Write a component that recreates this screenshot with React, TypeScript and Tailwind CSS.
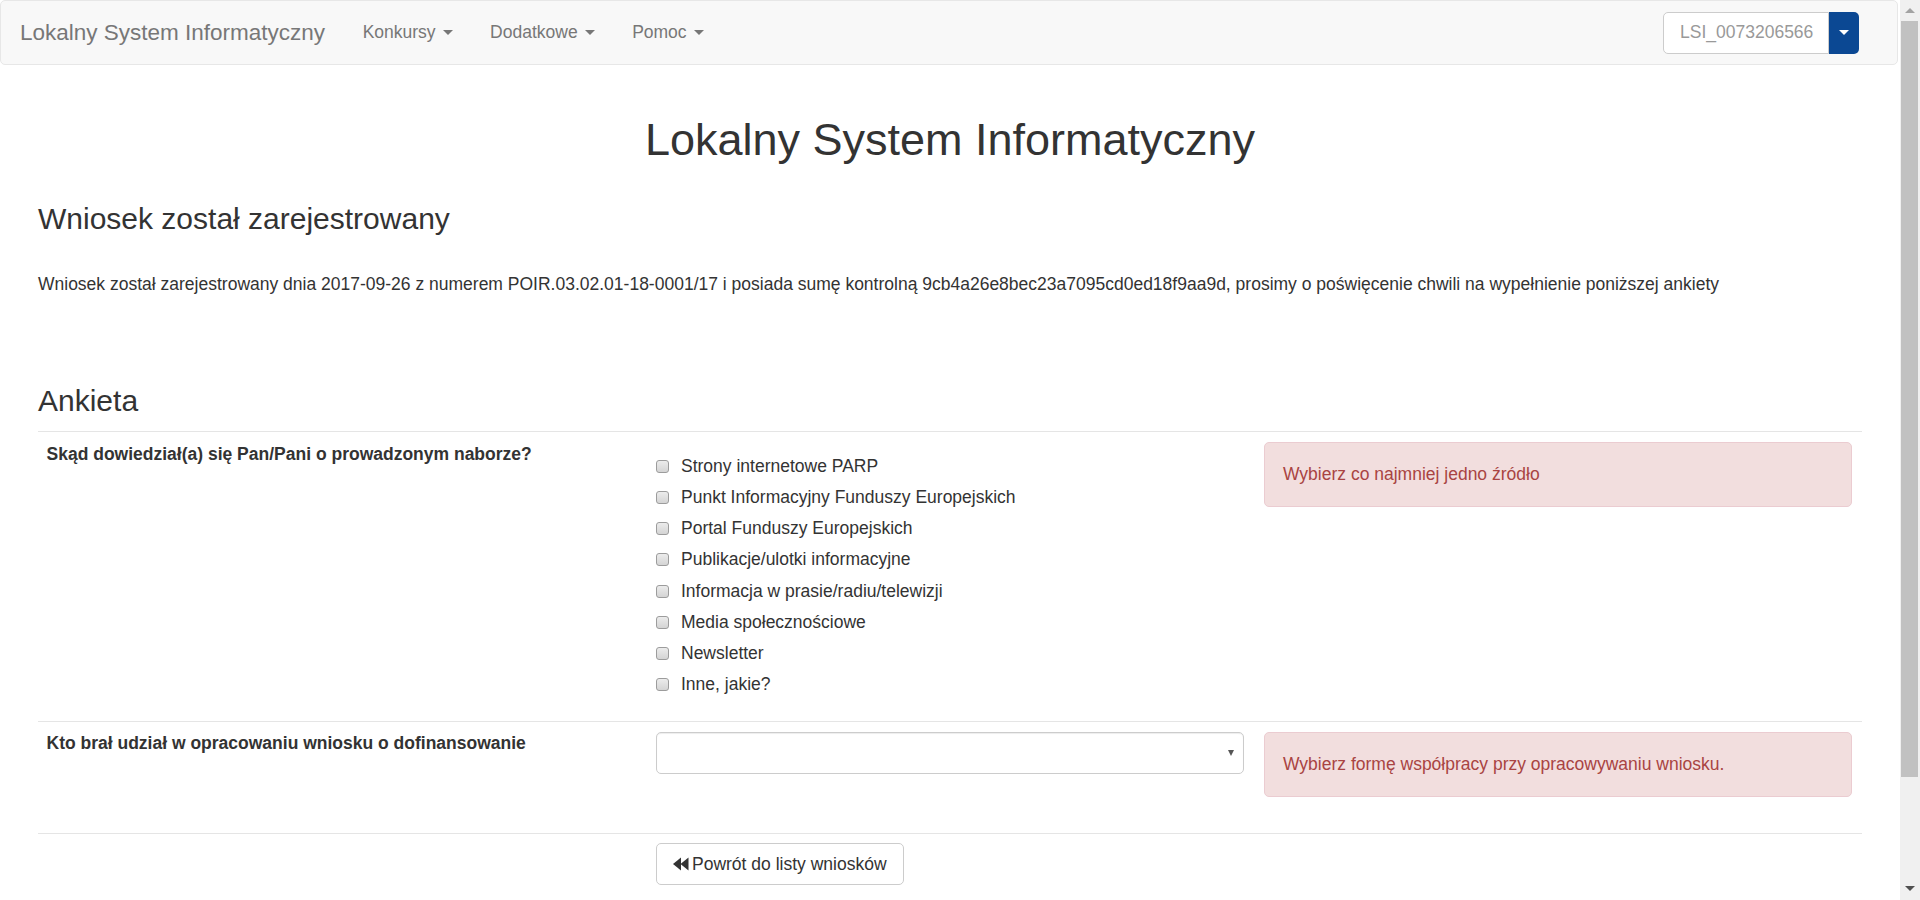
import React from 'react';

// Small caret used by dropdown toggles
const Caret = ({ className = '' }: { className?: string }) => (
  <span
    className={`inline-block h-0 w-0 border-x-[5px] border-t-[5px] border-x-transparent border-t-current align-middle ${className}`}
  />
);

const sources = [
  'Strony internetowe PARP',
  'Punkt Informacyjny Funduszy Europejskich',
  'Portal Funduszy Europejskich',
  'Publikacje/ulotki informacyjne',
  'Informacja w prasie/radiu/telewizji',
  'Media społecznościowe',
  'Newsletter',
  'Inne, jakie?',
];

const navItems = ['Konkursy', 'Dodatkowe', 'Pomoc'];

// Gray windows-like checkbox
const FakeCheckbox = () => (
  <span className="inline-block h-[13px] w-[13px] shrink-0 rounded-[3px] border border-[#9c9c9c] bg-linear-to-b from-[#ececec] to-[#d4d4d4]" />
);

const Navbar = () => (
  <nav className="mr-[2px] flex h-[65px] items-center rounded-[5px] border border-[#e7e7e7] bg-[#f8f8f8] pl-[19px] pr-[38px]">
    <span className="mr-[18.75px] text-[22.5px] leading-[25px] text-[#777]">Lokalny System Informatyczny</span>
    <ul className="flex">
      {navItems.map((item) => (
        <li key={item} className="flex items-center px-[18.75px] text-[#777]">
          <span>{item}</span>
          <Caret className="ml-[7px]" />
        </li>
      ))}
    </ul>
    <div className="ml-auto flex h-[42px]">
      <div className="flex w-[166px] items-center rounded-l-[5px] border border-[#ccc] bg-white pl-[16px] text-[#999]">
        LSI_0073206566
      </div>
      <div className="flex w-[30px] items-center justify-center rounded-r-[5px] bg-[#0b4893] text-white">
        <Caret />
      </div>
    </div>
  </nav>
);

const Alert = ({ children }: { children: React.ReactNode }) => (
  <div className="rounded-[5px] border border-[#ebccd1] bg-[#f2dede] px-[18px] py-[19px] text-[#a94442]">{children}</div>
);

const Scrollbar = () => (
  <div className="flex h-[900px] w-[20px] shrink-0 flex-col bg-[#f0f0f0]">
    <div className="flex h-[21px] items-center justify-center">
      <span className="inline-block h-0 w-0 border-x-[5px] border-b-[5px] border-x-transparent border-b-[#a3a3a3]" />
    </div>
    <div className="ml-[1px] h-[756px] w-[17px] bg-[#c1c1c1]" />
    <div className="flex flex-1 items-end justify-center pb-[9px]">
      <span className="inline-block h-0 w-0 border-x-[5px] border-t-[5px] border-x-transparent border-t-[#505050]" />
    </div>
  </div>
);

export default function App() {
  return (
    <div className="flex h-[900px] overflow-hidden bg-white font-['Liberation_Sans',Arial,sans-serif] text-[17.5px] leading-[25px] text-[#333]">
      <div className="min-w-0 flex-1">
        <Navbar />

        <main className="px-[38px]">
          <h1 className="mt-[50px] text-center text-[45px] leading-[49.5px] font-normal">Lokalny System Informatyczny</h1>

          <h3 className="mt-[37.5px] text-[30px] leading-[33px] font-normal">Wniosek został zarejestrowany</h3>
          <p className="mt-[36.5px]">
            Wniosek został zarejestrowany dnia 2017-09-26 z numerem POIR.03.02.01-18-0001/17 i posiada sumę kontrolną
            9cb4a26e8bec23a7095cd0ed18f9aa9d, prosimy o poświęcenie chwili na wypełnienie poniższej ankiety
          </p>

          <h3 className="mt-[87px] text-[30px] leading-[33px] font-normal">Ankieta</h3>

          <div className="mt-[14.5px]">
            {/* Question 1 */}
            <div className="grid grid-cols-3 border-t border-[#e5e5e5] pt-[10px] pb-[23.75px]">
              <div className="pl-[8.5px] pr-[10px] font-bold">Skąd dowiedział(a) się Pan/Pani o prowadzonym naborze?</div>
              <div className="flex flex-col gap-[6.25px] px-[10px] pt-[11.5px]">
                {sources.map((s) => (
                  <label key={s} className="flex h-[25px] items-center">
                    <FakeCheckbox />
                    <span className="ml-[12px]">{s}</span>
                  </label>
                ))}
              </div>
              <div className="px-[10px]">
                <Alert>Wybierz co najmniej jedno źródło</Alert>
              </div>
            </div>

            {/* Question 2 */}
            <div className="grid grid-cols-3 border-t border-[#e5e5e5] pt-[10px] pb-[36px]">
              <div className="-mt-[1.5px] pl-[8.5px] pr-[10px] font-bold">Kto brał udział w opracowaniu wniosku o dofinansowanie</div>
              <div className="px-[10px]">
                <div className="flex h-[42px] items-center justify-end rounded-[5px] border border-[#ccc] bg-white pr-[9px] shadow-[inset_0_1px_1px_rgba(0,0,0,0.075)]">
                  <span className="inline-block h-0 w-0 border-x-[3.5px] border-t-[6px] border-x-transparent border-t-[#555]" />
                </div>
              </div>
              <div className="px-[10px]">
                <Alert>Wybierz formę współpracy przy opracowywaniu wniosku.</Alert>
              </div>
            </div>

            {/* Actions */}
            <div className="grid grid-cols-3 border-t border-[#e5e5e5] pt-[9px]">
              <div />
              <div className="px-[10px]">
                <button className="flex h-[42px] items-center rounded-[5px] border border-[#ccc] bg-white px-[16px] text-[#333]">
                  <svg width="16" height="14" viewBox="0 0 16 14" className="mr-[3px]" fill="#333">
                    <polygon points="0,7 8,0.5 8,13.5" />
                    <polygon points="7.5,7 15.5,0.5 15.5,13.5" />
                  </svg>
                  Powrót do listy wniosków
                </button>
              </div>
            </div>
          </div>
        </main>
      </div>
      <Scrollbar />
    </div>
  );
}
